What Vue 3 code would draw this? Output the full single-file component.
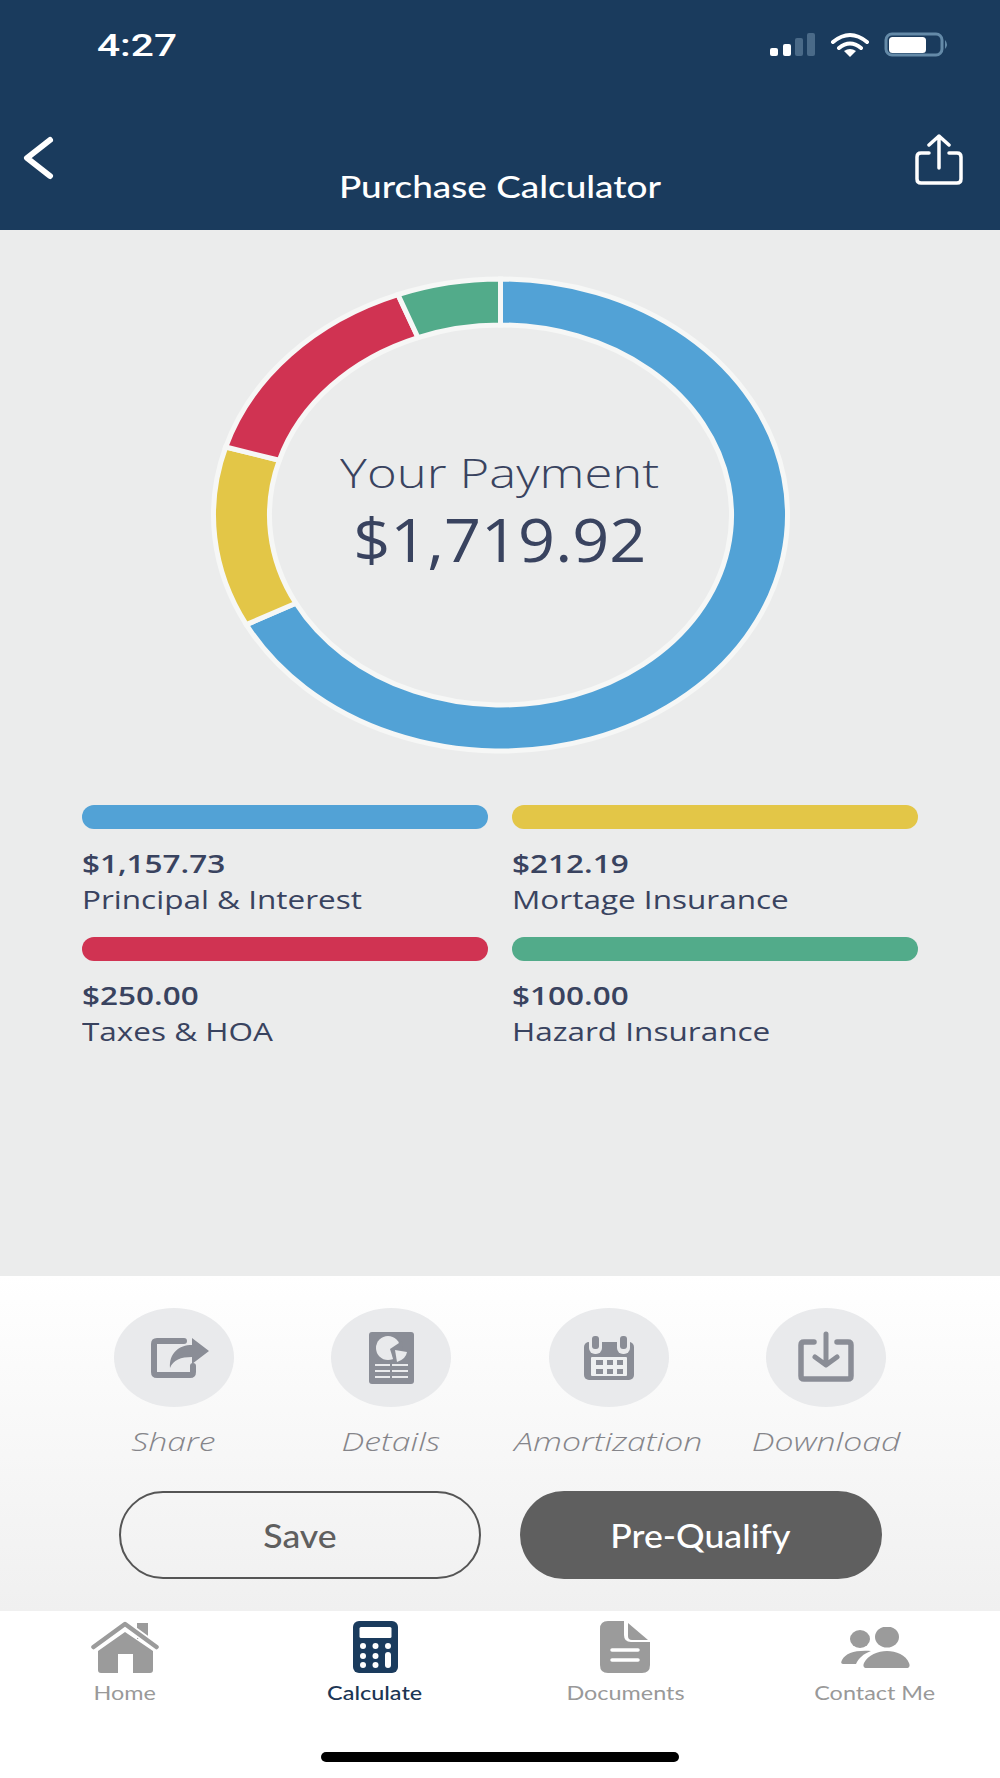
<script setup>
const total = 1719.92
const rx = 287
const ry = 236
const segments = [
  { value: 1157.73, color: '#52a2d6' },
  { value: 212.19, color: '#e3c647' },
  { value: 250, color: '#d03352' },
  { value: 100, color: '#52ab8a' }
]
function point(angle, r) {
  return `${(Math.sin(angle) * r).toFixed(5)} ${(-Math.cos(angle) * r).toFixed(5)}`
}
let start = 0
const arcs = segments.map((s) => {
  const sweep = (s.value / total) * Math.PI * 2
  const end = start + sweep
  const large = sweep > Math.PI ? 1 : 0
  const d = `M${point(start, 1)} A1 1 0 ${large} 1 ${point(end, 1)} L${point(end, 0.805)} A0.805 0.805 0 ${large} 0 ${point(start, 0.805)} Z`
  start = end
  return { d, color: s.color }
})
const legend = [
  { amount: '$1,157.73', label: 'Principal & Interest', color: '#52a2d6' },
  { amount: '$212.19', label: 'Mortage Insurance', color: '#e3c647' },
  { amount: '$250.00', label: 'Taxes & HOA', color: '#d03352' },
  { amount: '$100.00', label: 'Hazard Insurance', color: '#52ab8a' }
]
</script>

<template>
  <div class="screen">
    <header class="header">
      <div class="status">
        <span class="time">4:27</span>
        <svg class="status-icons" width="182" height="30" viewBox="768 30 182 30">
          <rect x="770" y="48" width="8" height="8" rx="2" fill="#fff" />
          <rect x="783" y="44" width="8" height="12" rx="2" fill="#fff" />
          <rect x="795" y="38" width="8" height="18" rx="2" fill="#4a6a88" />
          <rect x="807" y="33" width="8" height="23" rx="2" fill="#4a6a88" />
          <path d="M833 42Q850 28 867 42M839 48Q850 39 861 48" fill="none" stroke="#fff" stroke-width="4" stroke-linecap="round" />
          <path d="M844 51Q850 47 856 51L850 57Z" fill="#fff" />
          <rect x="886" y="34" width="56" height="21" rx="6" fill="none" stroke="#648aa8" stroke-width="3" />
          <rect x="889" y="37" width="37" height="16" rx="3.500" fill="#fff" />
          <path d="M945 40Q949 44.500 945 49Z" fill="#648aa8" />
        </svg>
      </div>
      <div class="titlebar">
        <svg width="32" height="44" viewBox="0 0 32 44">
          <path d="M28 4L5 22L28 40" fill="none" stroke="#fff" stroke-width="6" stroke-linecap="round" stroke-linejoin="round" />
        </svg>
        <h1 class="title">Purchase Calculator</h1>
        <svg class="share" width="50" height="52" viewBox="0 0 50 52">
          <path d="M15 19H7Q3 19 3 23V45Q3 49 7 49H43Q47 49 47 45V23Q47 19 43 19H35" fill="none" stroke="#fff" stroke-width="3.500" stroke-linecap="round" />
          <path d="M25 2V34M15 11L25 2L35 11" fill="none" stroke="#fff" stroke-width="3.500" stroke-linecap="round" stroke-linejoin="round" />
        </svg>
      </div>
    </header>

    <main class="main">
      <div class="donut">
        <svg width="600" height="500" viewBox="0 0 600 500">
          <g :transform="`translate(300.5 250) scale(${rx} ${ry})`">
            <path v-for="arc in arcs" :key="arc.color" :d="arc.d" :fill="arc.color" stroke="#f6f7f6" stroke-width="5" vector-effect="non-scaling-stroke" />
          </g>
        </svg>
        <div class="center">
          <span class="pay-label">Your Payment</span>
          <span class="pay-value">$1,719.92</span>
        </div>
      </div>
      <div class="legend">
        <div v-for="item in legend" :key="item.label" class="legend-item">
          <div class="legend-bar" :style="{ background: item.color }"></div>
          <div class="legend-amount">{{ item.amount }}</div>
          <div class="legend-label">{{ item.label }}</div>
        </div>
      </div>
    </main>

    <section class="panel">
      <div class="actions">
        <div class="action">
          <div class="bubble">
            <svg class="icon-share" width="60" height="50" viewBox="0 0 60 50">
              <path d="M33 8H6Q3 8 3 11V39Q3 42 6 42H39Q42 42 42 39V33" fill="none" stroke="#8a8d96" stroke-width="6" stroke-linecap="round" />
              <path d="M58 18L41 5V12C28 12 18 20 19 35C22 27 30 24 41 24V31Z" fill="#8a8d96" />
            </svg>
          </div>
          <span class="action-label">Share</span>
        </div>
        <div class="action">
          <div class="bubble">
            <svg class="icon-details" width="50" height="60" viewBox="0 0 50 60">
              <rect x="4" y="4" width="45" height="52" rx="3" fill="#8a8d96" />
              <circle cx="23" cy="20" r="12" fill="#e9eaec" />
              <path d="M25 21L37 13L39 31L29 34Z" fill="#8a8d96" />
              <path d="M30 22L42 24Q41 31 32 34Z" fill="#e9eaec" />
              <path d="M10 37H25M27 37H43M10 43H25M27 43H43M10 49H25M27 49H43" stroke="#e9eaec" stroke-width="2" />
            </svg>
          </div>
          <span class="action-label">Details</span>
        </div>
        <div class="action">
          <div class="bubble">
            <svg class="icon-calendar" width="60" height="52" viewBox="0 0 60 52">
              <rect x="4" y="10" width="50" height="38" rx="5" fill="#8a8d96" />
              <rect x="9" y="2" width="13" height="20" rx="6" fill="#e9eaec" />
              <rect x="37" y="2" width="13" height="20" rx="6" fill="#e9eaec" />
              <rect x="12" y="4" width="7" height="13" rx="3" fill="#8a8d96" />
              <rect x="40" y="4" width="7" height="13" rx="3" fill="#8a8d96" />
              <rect x="11" y="25" width="36" height="19" rx="1" fill="#eef0f1" />
              <path d="M16 28h7v5h-7zM27 28h6v5h-6zM37 28h6v5h-6zM16 37h7v5h-7zM27 37h6v5h-6zM37 37h6v5h-6z" fill="#8a8d96" />
            </svg>
          </div>
          <span class="action-label">Amortization</span>
        </div>
        <div class="action">
          <div class="bubble">
            <svg width="64" height="54" viewBox="0 0 64 54">
              <path d="M20 11H10Q7 11 7 14V45Q7 48 10 48H54Q57 48 57 45V14Q57 11 54 11H43" fill="none" stroke="#8a8d96" stroke-width="5.500" stroke-linecap="round" />
              <path d="M32 3V33M21 26L32 34L43 26" fill="none" stroke="#8a8d96" stroke-width="5" stroke-linecap="round" stroke-linejoin="round" />
            </svg>
          </div>
          <span class="action-label">Download</span>
        </div>
      </div>
      <div class="buttons">
        <button class="btn btn-outline"><span>Save</span></button>
        <button class="btn btn-solid"><span>Pre-Qualify</span></button>
      </div>
    </section>

    <nav class="nav">
      <div class="tabs">
        <div class="tab">
          <div class="tab-icon">
            <svg width="68" height="52" viewBox="0 0 68 52">
              <rect x="46" y="2" width="11" height="16" fill="#9b9b9b" />
              <path d="M34 11L7 30V49Q7 52 10 52H27V33H42V52H59Q62 52 62 49V30Z" fill="#9b9b9b" />
              <path d="M2.500 26L34 3L65.500 26" fill="none" stroke="#fff" stroke-width="8" />
              <path d="M2.500 26L34 3L65.500 26" fill="none" stroke="#9b9b9b" stroke-width="4.500" stroke-linecap="round" stroke-linejoin="round" />
            </svg>
          </div>
          <span class="tab-label">Home</span>
        </div>
        <div class="tab active">
          <div class="tab-icon">
            <svg width="45" height="52" viewBox="0 0 45 52">
              <rect width="45" height="52" rx="6" fill="#1a3b5d" />
              <rect x="6.500" y="6" width="32" height="11" rx="1.500" fill="#fff" />
              <g fill="#fff">
                <circle cx="10" cy="25" r="3" />
                <circle cx="22.500" cy="25" r="3" />
                <circle cx="35" cy="25" r="3" />
                <circle cx="10" cy="35" r="3" />
                <circle cx="22.500" cy="35" r="3" />
                <circle cx="10" cy="44" r="3" />
                <circle cx="22.500" cy="44" r="3" />
                <rect x="32" y="31" width="6" height="16" rx="3" />
              </g>
            </svg>
          </div>
          <span class="tab-label">Calculate</span>
        </div>
        <div class="tab">
          <div class="tab-icon">
            <svg width="50" height="52" viewBox="0 0 50 52">
              <path d="M8 0H24V14Q24 21 31 21H50V44Q50 52 42 52H8Q0 52 0 44V8Q0 0 8 0Z" fill="#9b9b9b" />
              <path d="M28 2L48 19H32Q28 19 28 15Z" fill="#9b9b9b" />
              <path d="M12 29H38M12 39H38" stroke="#fff" stroke-width="3.500" stroke-linecap="round" />
            </svg>
          </div>
          <span class="tab-label">Documents</span>
        </div>
        <div class="tab">
          <div class="tab-icon">
            <svg width="69" height="41" viewBox="0 0 69 41">
              <ellipse cx="46" cy="10" rx="12" ry="10.500" fill="#9b9b9b" />
              <ellipse cx="19" cy="12" rx="10" ry="9" fill="#9b9b9b" />
              <path d="M26 41Q21 41 23 36C27 28 37 24 46 24C55 24 65 28 68 36Q70 41 65 41Z" fill="#9b9b9b" />
              <path d="M2 37Q-1 37 1 33C5 26 14 23 30 24C22 27 18 31 15 37Z" fill="#9b9b9b" />
            </svg>
          </div>
          <span class="tab-label">Contact Me</span>
        </div>
      </div>
      <div class="home-bar"></div>
    </nav>
  </div>
</template>

<style scoped>
.screen {
  width: 1000px;
  height: 1778px;
  display: flex;
  flex-direction: column;
  overflow: hidden;
  font-family: "Open Sans", sans-serif;
  background: #ebecec;
}
.header {
  height: 230px;
  flex: none;
  background: #1a3b5d;
  box-sizing: border-box;
  color: #fff;
}
.status {
  height: 130px;
  box-sizing: border-box;
  padding: 30px 50px 0 97px;
  display: flex;
  justify-content: space-between;
  align-items: flex-start;
}
.time {
  font-family: Roboto, sans-serif;
  font-weight: 500;
  font-size: 32px;
  line-height: 30px;
  display: inline-block;
  transform: scaleX(1.27);
  transform-origin: left center;
}
.titlebar {
  position: relative;
  display: flex;
  justify-content: space-between;
  align-items: flex-start;
  padding: 6px 36px 0 22px;
}
.share {
  margin-top: -2px;
}
.title {
  position: absolute;
  left: 0;
  right: 0;
  top: 38px;
  margin: 0;
  text-align: center;
  font-family: Lato, sans-serif;
  font-weight: 500;
  font-size: 30px;
  line-height: 36px;
  transform: scaleX(1.23);
}
.main {
  height: 1046px;
  flex: none;
  box-sizing: border-box;
  padding-top: 35px;
  display: flex;
  flex-direction: column;
  align-items: center;
}
.donut {
  position: relative;
  width: 600px;
  height: 500px;
  flex: none;
}
.donut svg {
  display: block;
}
.center {
  position: absolute;
  inset: 0 0 8px;
  display: flex;
  flex-direction: column;
  align-items: center;
  justify-content: center;
  color: #39435f;
}
.pay-label {
  font-weight: 300;
  font-size: 40px;
  line-height: 56px;
  transform: scaleX(1.27);
}
.pay-value {
  font-weight: 500;
  font-size: 60px;
  line-height: 76px;
  transform: scaleX(1.08);
}
.legend {
  margin-top: 40px;
  width: 836px;
  display: grid;
  grid-template-columns: 406px 406px;
  column-gap: 24px;
  color: #39435f;
}
.legend-item {
  height: 132px;
}
.legend-bar {
  height: 24px;
  border-radius: 12px;
}
.legend-amount,
.legend-label {
  font-size: 25px;
  line-height: 36px;
  transform: scaleX(1.26);
  transform-origin: left center;
  white-space: nowrap;
}
.legend-amount {
  margin-top: 16px;
  font-weight: 600;
}
.panel {
  height: 335px;
  flex: none;
  box-sizing: border-box;
  padding-top: 32px;
  background: linear-gradient(#ffffff, #f0f0f0);
}
.actions {
  display: grid;
  grid-template-columns: repeat(4, 217.5px);
  padding-left: 65px;
}
.action {
  display: flex;
  flex-direction: column;
  align-items: center;
}
.bubble {
  width: 120px;
  height: 99px;
  border-radius: 50%;
  background: #e9eaec;
  display: flex;
  align-items: center;
  justify-content: center;
}
.icon-share {
  margin-left: 14px;
}
.icon-details {
  margin-right: 2px;
}
.icon-calendar {
  margin-left: 2px;
}
.action-label {
  margin-top: 17px;
  font-style: italic;
  font-weight: 300;
  font-size: 26px;
  line-height: 34px;
  color: #85858a;
  transform: scaleX(1.3);
  white-space: nowrap;
}
.buttons {
  margin-top: 33px;
  display: flex;
  justify-content: center;
  gap: 39px;
}
.btn {
  width: 362px;
  height: 88px;
  box-sizing: border-box;
  border-radius: 44px;
  font-family: Lato, sans-serif;
  font-size: 33px;
  font-weight: 500;
  padding: 0;
}
.btn span {
  display: inline-block;
  transform: scaleX(1.08);
}
.btn-outline {
  background: transparent;
  border: 2px solid #555;
  color: #5f5f5f;
}
.btn-solid {
  background: #5f5f5f;
  border: none;
  color: #fff;
}
.nav {
  flex: 1;
  background: #fff;
  display: flex;
  flex-direction: column;
}
.tabs {
  display: grid;
  grid-template-columns: repeat(4, 250px);
  padding-top: 10px;
}
.tab {
  display: flex;
  flex-direction: column;
  align-items: center;
}
.tab-icon {
  height: 52px;
  display: flex;
  align-items: center;
  justify-content: center;
}
.tab-label {
  margin-top: 6px;
  font-family: Lato, sans-serif;
  font-size: 20px;
  line-height: 26px;
  color: #999;
  transform: scaleX(1.17);
  white-space: nowrap;
}
.active .tab-label {
  color: #1c3654;
  font-weight: 500;
}
.home-bar {
  width: 358px;
  height: 10px;
  border-radius: 5px;
  background: #000;
  margin: 47px auto 0;
}
</style>

<style>
html, body { margin: 0; }
</style>
